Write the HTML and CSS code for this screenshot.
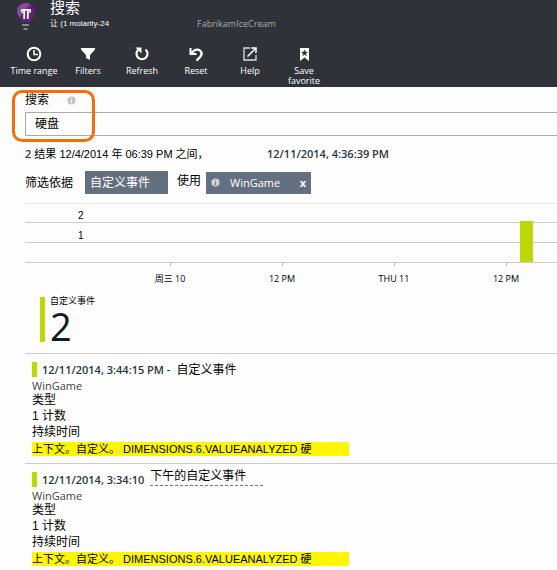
FILE: index.html
```html
<!DOCTYPE html>
<html lang="zh-CN">
<head>
<meta charset="utf-8">
<title>搜索</title>
<link rel="stylesheet" href="styles.css">
</head>
<body>
<header class="blade">
  <div class="heading">
    <svg class="bulb" viewBox="0 0 20 32" width="20" height="32" aria-hidden="true">
      <path fill="#68217a" d="M10 3C5 3 1 6.700 1 11.500c0 4 3.500 5.500 4.500 10.500h9c1-5 4.500-6.500 4.500-10.500C19 6.700 15 3 10 3z"/>
      <path fill="#8a4a9c" d="M10 3C5 3 1 6.700 1 11.500c0 2.500 1.500 4 2.700 6L14 4C12.800 3.300 11.500 3 10 3z"/>
      <path fill="none" stroke="#fff" stroke-width="1.800" d="M8.200 19v-9M11.800 19v-9M5.500 9.800h9"/>
      <path fill="none" stroke="#fff" stroke-width="1.300" d="M7.500 12.500c-3 0-2.500-3.300 0-2.700M12.500 12.500c3 0 2.500-3.300 0-2.700"/>
      <path stroke="#85888c" stroke-width="2" d="M6 25h7M7.500 29h4"/>
    </svg>
    <div class="titles">
      <h1>搜索</h1>
      <p class="subtitle">让 (1 molarity-24</p>
    </div>
    <p class="resource">FabrikamIceCream</p>
  </div>
  <nav class="toolbar">
    <button type="button"><svg viewBox="0 0 16 16"><circle cx="8" cy="8" r="6.300" fill="none" stroke="#fff" stroke-width="2"/><path d="M8 4v4.500h4" fill="none" stroke="#fff" stroke-width="1.500"/></svg><span>Time range</span></button>
    <button type="button"><svg viewBox="0 0 16 16"><path d="M1 2h14v1.500L10 9v5l-4-2V9L1 3.500z" fill="#fff"/></svg><span>Filters</span></button>
    <button type="button"><svg viewBox="0 0 16 16"><path d="M11.500 3.500a5.500 5.500 0 1 1-7 0" fill="none" stroke="#fff" stroke-width="2.200"/><path d="M1.500 1.500H7.500v6z" fill="#fff"/></svg><span>Refresh</span></button>
    <button type="button"><svg viewBox="0 0 16 16"><path d="M3 7.500C6 4 9 2.500 12 4.500c3.500 3 1 6.500-3.500 10" fill="none" stroke="#fff" stroke-width="2.300"/><path d="M2.500 2v6h6" fill="none" stroke="#fff" stroke-width="2"/></svg><span>Reset</span></button>
    <button type="button"><svg viewBox="0 0 16 16"><path d="M8 2H2v12h12V9" fill="none" stroke="#ddd" stroke-width="1.300"/><path d="M5.500 10.500L13.500 2.500M9 2h5v5" fill="none" stroke="#fff" stroke-width="1.500"/></svg><span>Help</span></button>
    <button type="button"><svg viewBox="0 0 16 16"><path d="M4 2h9v13l-4.500-3.500L4 15z" fill="#fff"/><path d="M8.500 3.500l1 2.300 2.500.2-2 1.600.7 2.400-2.200-1.300L6.300 10 7 7.600 5 6l2.500-.2z" fill="#2f3239"/></svg><span class="two-line">Save favorite</span></button>
  </nav>
</header>
<main>
  <section class="search">
    <div class="search-label">
      <label for="query">搜索</label>
      <svg class="info" viewBox="0 0 10 10" aria-hidden="true"><circle cx="5" cy="5" r="4.500" fill="#c3c3c3"/><path d="M5 2v1.200M5 4.200v3.500M4 7.500h2" stroke="#fff"/></svg>
    </div>
    <input id="query" type="text" value="硬盘">
    <span class="callout"></span>
  </section>

  <p class="range"><span><span class="ui">2</span> 结果 12/4/2014 年 06:39 PM 之间，</span><span class="ui">12/11/2014, 4:36:39 PM</span></p>

  <div class="filters">
    <span class="filter-label">筛选依据</span>
    <button type="button" class="chip chip-type">自定义事件</button>
    <span class="using">使用</span>
    <button type="button" class="chip chip-name"><svg class="info" viewBox="0 0 10 10" aria-hidden="true"><circle cx="5" cy="5" r="4.500" fill="#d0d3d6"/><path d="M5 2v1.200M5 4.200v3.500M4 7.500h2" stroke="#647080"/></svg><span>WinGame</span><b>x</b></button>
  </div>

  <section class="chart">
    <div class="plot">
      <div class="band"></div>
      <div class="band"><span>2</span></div>
      <div class="band"><span>1</span></div>
      <div class="bar" style="left: 93%; height: 41px"></div>
    </div>
    <div class="axis"><span>周三 10</span><span>12 PM</span><span>THU 11</span><span>12 PM</span></div>
  </section>

  <section class="total">
    <h2>自定义事件</h2>
    <p>2</p>
  </section>

  <article class="event">
    <h3><span class="ui">12/11/2014, 3:44:15 PM -</span> <span>自定义事件</span></h3>
    <p class="name">WinGame</p>
    <p>类型</p>
    <p>1 计数</p>
    <p>持续时间</p>
    <p class="match">上下文。自定义。 DIMENSIONS.6.VALUEANALYZED 硬</p>
  </article>
  <article class="event">
    <h3><span class="ui">12/11/2014, 3:34:10</span> <span class="raised">下午的自定义事件</span></h3>
    <p class="name">WinGame</p>
    <p>类型</p>
    <p>1 计数</p>
    <p>持续时间</p>
    <p class="match">上下文。自定义。 DIMENSIONS.6.VALUEANALYZED 硬</p>
  </article>
</main>
</body>
</html>
```
FILE: styles.css
```css
* {
  box-sizing: border-box;
}

body {
  margin: 0;
  background: #fdfdfd;
  color: #000;
  font: 12px/16px "Liberation Sans", "Noto Sans CJK SC", sans-serif;
  overflow-x: hidden;
}

h1, h2, h3, p {
  margin: 0;
  font-weight: normal;
}

button, input {
  font: inherit;
  color: inherit;
  border: 0;
  margin: 0;
}

.ui {
  font: 600 11px/16px "Open Sans", "Noto Sans CJK SC", sans-serif;
  color: #2a3640;
}

.blade {
  height: 87px;
  background: #2f3239;
  color: #fff;
}

.heading {
  display: flex;
  height: 44px;
  padding-left: 16px;
}

.titles {
  width: 161px;
  padding-left: 14px;
}

h1 {
  font-size: 15px;
  line-height: 16px;
}

.subtitle {
  font-size: 8px;
}

.resource {
  padding-top: 16px;
  color: #a8abaf;
  font: 9px/16px "Open Sans", sans-serif;
}

.toolbar {
  display: flex;
  align-items: flex-start;
  padding-left: 7px;
}

.toolbar button {
  display: flex;
  flex-direction: column;
  align-items: center;
  gap: 4px;
  width: 54px;
  padding: 2px 0 0;
  background: none;
  font: 500 9px/10px "Open Sans", sans-serif;
}

.toolbar svg {
  width: 16px;
  height: 16px;
}

.two-line {
  width: 40px;
}

main {
  padding-left: 25px;
}

.search {
  position: relative;
  padding-top: 5px;
}

.search-label {
  display: flex;
  align-items: center;
  gap: 18px;
  height: 20px;
  padding-bottom: 4px;
}

.info {
  width: 9px;
  height: 9px;
}

.search input {
  display: block;
  width: 100%;
  height: 24px;
  padding: 0 9px 4px;
  background: #fdfdfd;
  border: 1px solid #ababab;
  border-right: 0;
}

.callout {
  position: absolute;
  top: 3px;
  left: -13px;
  width: 83px;
  height: 52px;
  border: 3px solid #f96b07;
  border-radius: 10px;
  pointer-events: none;
}

.range {
  display: flex;
  padding-top: 10px;
}

.range > :first-child {
  width: 242px;
  font-size: 11px;
}

.filters {
  display: flex;
  align-items: center;
  height: 41px;
}

.filter-label {
  width: 60px;
}

.chip {
  display: flex;
  align-items: center;
  height: 23px;
  padding: 0 5px;
  background: #647080;
  color: #fff;
}

.chip-type {
  width: 83px;
}

.using {
  width: 38px;
  padding: 0 0 4px 9px;
}

.chip-name {
  gap: 10px;
  width: 105px;
  height: 22px;
  font: 500 11px/16px "Open Sans", sans-serif;
}

.chip-name b {
  margin-left: auto;
}

.plot {
  position: relative;
  border-bottom: 1px solid #ccc;
}

.band {
  height: 20px;
  border-top: 1px solid #ccc;
  font: 10px/18px "Liberation Sans", sans-serif;
}

.band:first-child {
  height: 19px;
  border-top-color: #e6e6e6;
}

.band span {
  position: relative;
  top: -16px;
  left: 53px;
}

.bar {
  position: absolute;
  bottom: 0;
  width: 13px;
  background: #bad80a;
}

.axis {
  display: grid;
  grid-template-columns: repeat(4, 112fr);
  margin: 0 -5px 0 89px;
  font: 9px/16px "Open Sans", "Noto Sans CJK SC", sans-serif;
  text-align: center;
}

.axis span::before {
  content: "";
  display: block;
  width: 1px;
  height: 3px;
  margin: 0 auto 5px;
  background: #bbb;
}

.total {
  margin: 10px 0 11px 15px;
  padding-left: 5px;
  border-left: 5px solid #bad80a;
}

.total h2 {
  font-size: 9px;
  line-height: 9px;
}

.total p {
  padding-top: 4px;
  font: 500 38px/32px "Open Sans", sans-serif;
  color: #0b1b26;
}

.event {
  height: 110px;
  padding: 8px 0 0 7px;
  border-top: 1px solid #ccc;
}

.event h3 {
  display: flex;
  gap: 6px;
  height: 15px;
  padding-left: 5px;
  border-left: 5px solid #bad80a;
  font-size: 12px;
}

.event .name {
  height: 15px;
  color: #444;
  font: 11px/18px "Open Sans", sans-serif;
}

.event .match {
  width: 317px;
  height: 14px;
  margin-top: 2px;
  background: #fff600;
  font-size: 11px;
  line-height: 14px;
}

.raised {
  height: 14px;
  padding-right: 17px;
  border-bottom: 1px dashed #777;
  line-height: 8px;
}
```
